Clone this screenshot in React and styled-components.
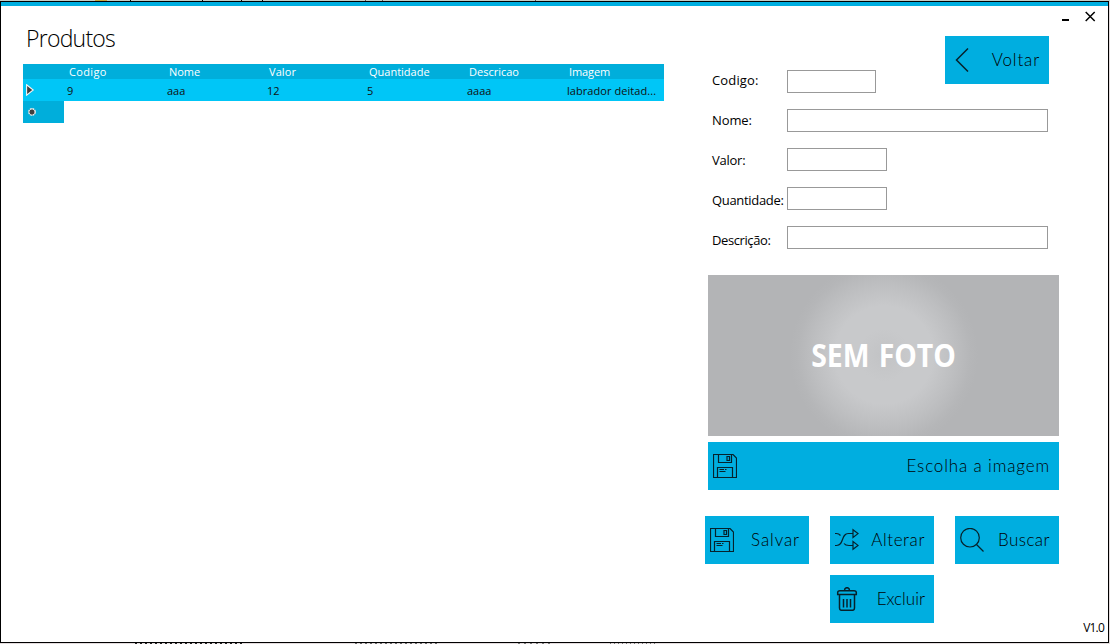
import React from 'react';
import styled, { createGlobalStyle } from 'styled-components';

const Global = createGlobalStyle`
  * { box-sizing: border-box; }
  html, body { margin: 0; background: #e6dedf; }
`;

const Desktop = styled.div`
  width: 1110px;
  height: 644px;
  padding: 1px 1px 1px 0;
  overflow: hidden;
  background:
    linear-gradient(90deg, transparent 95px, #c9a63f 95px 107px, transparent 107px 130px, #000 130px 131px, transparent 131px 202px, #000 202px 203px, transparent 203px 241px, #000 241px 242px, transparent 242px 262px, #000 262px 263px, transparent 263px 365px, #555 365px 366px, transparent 366px 382px, #555 382px 383px, transparent 383px 535px, #555 535px 536px, transparent 536px) 0 0 / 100% 1px no-repeat,
    repeating-linear-gradient(90deg, #222 0 2px, #e3dcdd 2px 5px) 135px 643px / 107px 1px no-repeat,
    repeating-linear-gradient(90deg, #666 0 2px, #e3dcdd 2px 5px) 355px 643px / 85px 1px no-repeat,
    repeating-linear-gradient(90deg, #777 0 2px, #e3dcdd 2px 6px) 518px 643px / 36px 1px no-repeat,
    repeating-linear-gradient(90deg, #777 0 1px, #e3dcdd 1px 4px) 610px 643px / 48px 1px no-repeat,
    linear-gradient(#c3cec8 0 1px, #e3dcdd 1px);
  font-family: 'Open Sans', sans-serif;
  color: #000;
`;

const Window = styled.main`
  height: 642px;
  display: flex;
  flex-direction: column;
  border: 1px solid #000;
  background: #fff;
`;

const Accent = styled.div`
  flex: none;
  height: 4px;
  background: #00aee0;
`;

const Controls = styled.div`
  flex: none;
  display: flex;
  justify-content: flex-end;
  gap: 15px;
  height: 20px;
  padding: 5px 12px 0 0;
  svg { display: block; }
`;

const Body = styled.div`
  flex: 1;
  display: flex;
  justify-content: space-between;
  padding: 0 49px 0 22px;
`;

const Title = styled.h1`
  margin: 0 0 0 3px;
  height: 38px;
  font-size: 23px;
  line-height: 25px;
  font-weight: 300;
  letter-spacing: -0.75px;
`;

const Grid = styled.div`
  width: 641px;
`;

const GridRow = styled.div`
  display: grid;
  grid-template-columns: 41px repeat(6, 100px);
  align-items: center;
  height: ${(p) => (p.$head ? 15 : 22)}px;
  background: ${(p) => (p.$head ? '#00aedb' : p.$selected ? '#00c6f7' : 'none')};
`;

const Cell = styled.div`
  padding-left: ${(p) => (p.$head ? 5 : 3)}px;
  font-size: 11px;
  line-height: 15px;
  color: ${(p) => (p.$head ? '#fff' : '#111')};
  letter-spacing: ${(p) => p.$track || 0}px;
  white-space: nowrap;
`;

const RowMark = styled.div`
  height: 100%;
  display: flex;
  align-items: center;
  padding-left: 3px;
  background: ${(p) => (p.$fill ? '#00aedb' : 'none')};
`;

const Side = styled.section`
  width: 354px;
  display: flex;
  flex-direction: column;
`;

const Button = styled.button`
  display: flex;
  align-items: center;
  justify-content: space-between;
  width: ${(p) => p.$w || 104}px;
  height: 48px;
  padding: 0 9px 0 5px;
  border: 0;
  background: #00aee0;
  color: #000;
  font-family: Lato, sans-serif;
  font-weight: 300;
  font-size: 17px;
  letter-spacing: ${(p) => p.$track || 0}px;
  white-space: nowrap;
  svg { flex: none; display: block; }
`;

const Caption = styled.span`
  padding-bottom: 2px;
`;

const BackRow = styled.div`
  display: flex;
  justify-content: flex-end;
  padding: 10px 10px 0 0;
`;

const Form = styled.form`
  display: flex;
  height: 205px;
  margin-top: -14px;
  padding-left: 7px;
`;

const Labels = styled.div`
  width: 75px;
  flex: none;
`;

const Label = styled.label`
  display: block;
  height: 40px;
  font-size: 13px;
  line-height: 21px;
  white-space: nowrap;
  letter-spacing: ${(p) => p.$track || 0}px;
`;

const Inputs = styled.div`
  display: flex;
  flex-direction: column;
  gap: 16px;
`;

const Input = styled.input`
  display: block;
  width: ${(p) => p.$w}px;
  height: 23px;
  padding: 0 4px;
  border: 1px solid #999;
  background: #fff;
  outline: 0;
`;

const Photo = styled.div`
  display: flex;
  align-items: center;
  justify-content: center;
  width: 351px;
  height: 161px;
  margin-left: 3px;
  padding-bottom: 2px;
  background: radial-gradient(circle 94px at 176px 80px, #c2c3c5 0, #c8c9cb 28%, #c8c9cb 52%, #bebfc1 74%, #b5b6b8 92%, #b3b4b6 100%);
  color: #fff;
  font-weight: 700;
  font-size: 32px;
  word-spacing: 2px;
`;

const PhotoText = styled.span`
  transform: scaleX(0.888);
  white-space: nowrap;
`;

const Choose = styled.div`
  margin: 6px 0 26px 3px;
`;

const Actions = styled.div`
  display: grid;
  grid-template-columns: repeat(3, 104px);
  gap: 11px 21px;
`;

const MidCell = styled.div`
  grid-column: 2;
`;

const Version = styled.footer`
  flex: none;
  height: 19px;
  padding-right: 4px;
  text-align: right;
  font-size: 12px;
  line-height: 9px;
  letter-spacing: -0.8px;
`;

const line = { fill: 'none', stroke: '#06222c', strokeWidth: 1.2 };

const SaveIcon = () => (
  <svg width="24" height="24" viewBox="0 0 24 24" {...line}>
    <path d="M.5.5H20L23.5 4V23.5H.5Z" />
    <path d="M5.5.5V8.5H18.5V.5" />
    <path d="M14 2.5H16.500V6.5H14Z" />
    <path d="M4.5 23.5V13.5H19.5V23.5M6.500 15.5H11M12 15.5H13.5M6.500 17.5H12.500" />
  </svg>
);

const ShuffleIcon = () => (
  <svg width="24" height="24" viewBox="0 0 24 24" {...line}>
    <path d="M0 5.5H1.5C3.500 5.5 4.500 6.3 5.500 7.5M0 17.5H1.5C9.500 17.5 5.500 5.500 13.500 5.500H18M9 15.5C10 17 11.500 17.5 14 17.500H18" />
    <path d="M18 1.700V9.500L23 5.600ZM18 13.500V21.300L23 17.400Z" />
  </svg>
);

const SearchIcon = () => (
  <svg width="24" height="24" viewBox="0 0 24 24" {...line}>
    <circle cx="10" cy="9.700" r="9.300" />
    <path d="M16.500 16.500L23.500 23.500" />
  </svg>
);

const TrashIcon = () => (
  <svg width="24" height="24" viewBox="0 0 24 24" {...line} strokeWidth="1.500">
    <path d="M9.500 3.500C9.500-.3 14.500-.3 14.500 3.500M5 3.700H19Q21.300 3.700 21.300 5.500V7.500H2.700V5.500Q2.700 3.700 5 3.700Z" />
    <path d="M4.500 7.500V21Q4.500 23.300 6.500 23.300H17.500Q19.500 23.300 19.500 21V7.500M8.500 12V20.500M12 12V20.500M15.500 12V20.500" />
  </svg>
);

const BackIcon = () => (
  <svg width="24" height="24" viewBox="0 0 24 24" {...line} strokeWidth="1.500">
    <path d="M18 .5L6.500 12L18 23.500" />
  </svg>
);

const heads = [['Codigo', 0.35], ['Nome', -0.05], ['Valor', 0.1], ['Quantidade', 0], ['Descricao', 0], ['Imagem', -0.1]];
const values = [['9', 0], ['aaa', 0], ['12', 0], ['5', 0], ['aaaa', 0], ['labrador deitad...', 0.06]];
const fields = [
  ['Codigo:', 89, 0.15],
  ['Nome:', 261, -0.1],
  ['Valor:', 100, -0.25],
  ['Quantidade:', 100, -0.32],
  ['Descrição:', 261, -0.4],
];

export default function App() {
  return (
    <Desktop>
      <Global />
      <Window>
        <Accent />
        <Controls>
          <svg width="8" height="11" viewBox="0 0 8 11"><path d="M0 8H7V10H0Z" /></svg>
          <svg width="11" height="11" viewBox="0 0 11 11" fill="none" stroke="#000" strokeWidth="1.500"><path d="M.7 1L9.700 10M9.700 1L.7 10" /></svg>
        </Controls>
        <Body>
          <div>
            <Title>Produtos</Title>
            <Grid>
              <GridRow $head>
                <span />
                {heads.map(([t, s]) => <Cell key={t} $head $track={s}>{t}</Cell>)}
              </GridRow>
              <GridRow $selected>
                <RowMark>
                  <svg width="9" height="12" viewBox="0 0 9 12"><path d="M.6 .8L7.200 6L.6 11.200Z" fill="#404040" stroke="#f4f4f4" strokeWidth="1.100" /></svg>
                </RowMark>
                {values.map(([t, s]) => <Cell key={t} $track={s}>{t}</Cell>)}
              </GridRow>
              <GridRow>
                <RowMark $fill>
                  <svg width="12" height="10" viewBox="0 0 12 10"><circle cx="6" cy="5" r="3.200" fill="#404040" stroke="#eee" strokeWidth="1.400" strokeDasharray="2 .5" /></svg>
                </RowMark>
              </GridRow>
            </Grid>
          </div>
          <Side>
            <BackRow><Button $track={0.85}><BackIcon /><Caption>Voltar</Caption></Button></BackRow>
            <Form>
              <Labels>{fields.map(([t, , s]) => <Label key={t} $track={s}>{t}</Label>)}</Labels>
              <Inputs>{fields.map(([t, w]) => <Input key={t} $w={w} aria-label={t} />)}</Inputs>
            </Form>
            <Photo><PhotoText>SEM FOTO</PhotoText></Photo>
            <Choose><Button $w={351} $track={0.85}><SaveIcon /><Caption>Escolha a imagem</Caption></Button></Choose>
            <Actions>
              <Button $track={0.9}><SaveIcon /><Caption>Salvar</Caption></Button>
              <Button $track={0.6}><ShuffleIcon /><Caption>Alterar</Caption></Button>
              <Button $track={0.45}><SearchIcon /><Caption>Buscar</Caption></Button>
              <MidCell><Button $track={0}><TrashIcon /><Caption>Excluir</Caption></Button></MidCell>
            </Actions>
          </Side>
        </Body>
        <Version>V1.0</Version>
      </Window>
    </Desktop>
  );
}
